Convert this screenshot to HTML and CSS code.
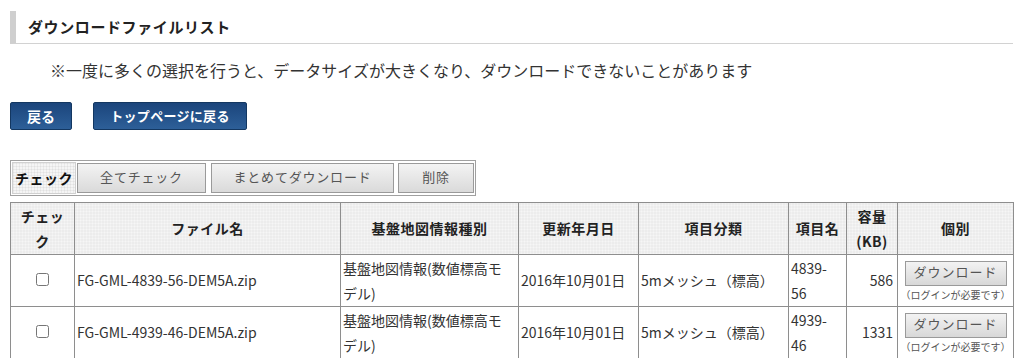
FILE: index.html
```html
<!DOCTYPE html>
<html lang="ja">
<head>
<meta charset="utf-8">
<title>ダウンロードファイルリスト</title>
<link rel="stylesheet" href="styles.css">
</head>
<body>
<div class="page">
  <h2 class="title">ダウンロードファイルリスト</h2>
  <p class="notice">※一度に多くの選択を行うと、データサイズが大きくなり、ダウンロードできないことがあります</p>
  <div class="nav">
    <button class="btn-blue btn-back">戻る</button>
    <button class="btn-blue btn-top">トップページに戻る</button>
  </div>
  <div class="checkbar">
    <div class="check-label">チェック</div>
    <button class="btn-grey w-all">全てチェック</button>
    <button class="btn-grey w-bulk">まとめてダウンロード</button>
    <button class="btn-grey w-del">削除</button>
  </div>
  <table class="list">
    <colgroup>
      <col class="c-check"><col class="c-name"><col class="c-kind"><col class="c-date"><col class="c-cat"><col class="c-item"><col class="c-size"><col class="c-dl">
    </colgroup>
    <thead>
      <tr>
        <th class="h-check">チェック</th>
        <th>ファイル名</th>
        <th>基盤地図情報種別</th>
        <th>更新年月日</th>
        <th>項目分類</th>
        <th>項目名</th>
        <th>容量<br>(KB)</th>
        <th>個別</th>
      </tr>
    </thead>
    <tbody>
      <tr>
        <td class="t-check"><input type="checkbox"></td>
        <td>FG-GML-4839-56-DEM5A.zip</td>
        <td class="t-kind">基盤地図情報(数値標高モデル)</td>
        <td>2016年10月01日</td>
        <td>5mメッシュ（標高）</td>
        <td class="t-item">4839-56</td>
        <td class="t-size">586</td>
        <td class="t-dl"><button class="btn-dl">ダウンロード</button><div class="login">（ログインが必要です）</div></td>
      </tr>
      <tr>
        <td class="t-check"><input type="checkbox"></td>
        <td>FG-GML-4939-46-DEM5A.zip</td>
        <td class="t-kind">基盤地図情報(数値標高モデル)</td>
        <td>2016年10月01日</td>
        <td>5mメッシュ（標高）</td>
        <td class="t-item">4939-46</td>
        <td class="t-size">1331</td>
        <td class="t-dl"><button class="btn-dl">ダウンロード</button><div class="login">（ログインが必要です）</div></td>
      </tr>
    </tbody>
  </table>
</div>
</body>
</html>
```

FILE: styles.css
```css
* { box-sizing: border-box; }
html, body { margin: 0; padding: 0; background: #fff; }
body {
  font-family: "Noto Sans CJK JP", "Noto Sans", sans-serif;
  color: #333;
  font-size: 14px;
}
.page {
  padding: 11px 11px 0 10px;
  width: 1024px;
}
.title {
  margin: 0;
  height: 33px;
  line-height: 32px;
  border-left: 6px solid #cfcfcf;
  border-bottom: 1px solid #d2d2d2;
  padding-left: 12px;
  font-size: 15px;
  font-weight: bold;
  letter-spacing: 0.6px;
  color: #222;
}
.notice {
  margin: 14px 0 0 0;
  padding-left: 40px;
  font-size: 16px;
  line-height: 24px;
  color: #333;
}
.nav {
  display: flex;
  gap: 21px;
  margin-top: 20px;
}
.btn-blue {
  font-family: inherit;
  height: 28px;
  border: 1px solid #133761;
  border-radius: 2px;
  background: linear-gradient(to bottom, #1b457c, #2d5f98);
  color: #fff;
  font-weight: bold;
  font-size: 13px;
  padding: 0;
  line-height: 26px;
}
.btn-back { width: 62px; font-size: 14px; }
.btn-top { width: 154px; letter-spacing: 0.3px; }
.checkbar {
  display: flex;
  align-items: stretch;
  width: 466px;
  height: 36px;
  margin-top: 30px;
  border: 1px solid #a0a0a0;
  padding: 1px;
}
.check-label {
  width: 64px;
  display: flex;
  align-items: center;
  justify-content: center;
  font-weight: bold;
  font-size: 14px;
  letter-spacing: 0.5px;
  color: #111;
  background-color: #f5f5f5;
  background-image: linear-gradient(90deg, rgba(0,0,0,0.045) 1px, transparent 1px), linear-gradient(rgba(0,0,0,0.045) 1px, transparent 1px);
  background-size: 3px 3px;
  border: 1px solid #d0d0d0;
}
.btn-grey {
  font-family: inherit;
  margin: 1px 0 1px 0;
  border: 1px solid #9a9a9a;
  background: linear-gradient(to bottom, #f3f3f3, #dadada);
  color: #555;
  font-size: 13px;
  letter-spacing: 0.8px;
  padding: 0 0 4px 0;
}
.w-all { width: 129px; margin-left: 1px; }
.w-bulk { width: 183px; margin-left: 5px; }
.w-del { width: 76px; margin-left: 4px; }
.list {
  margin-top: 6px;
  width: 1003px;
  table-layout: fixed;
  border-collapse: collapse;
  border: 1px solid #999;
}
.c-check { width: 64px; }
.c-name { width: 266px; }
.c-kind { width: 178px; }
.c-date { width: 120px; }
.c-cat { width: 150px; }
.c-item { width: 58px; }
.c-size { width: 51px; }
.c-dl { width: 116px; }
.list th, .list td {
  border: 1px solid #8e8e8e;
  line-height: 25px;
  font-size: 14px;
  vertical-align: middle;
}
.list th {
  height: 52px;
  padding: 0 2px;
  font-weight: bold;
  color: #222;
  letter-spacing: 0.5px;
  background-color: #f6f6f6;
  background-image: linear-gradient(90deg, rgba(0,0,0,0.045) 1px, transparent 1px), linear-gradient(rgba(0,0,0,0.045) 1px, transparent 1px);
  background-size: 3px 3px;
}
.list th.h-check { padding: 0 6px; }
.list td {
  height: 52px;
  padding: 0 2px;
  color: #333;
}
.list td.t-check { text-align: center; }
.t-check input { margin: 3px 0 0 0; width: 13px; height: 13px; }
.list td.t-kind { padding-right: 10px; }
.list td.t-item { padding-right: 10px; }
.list td.t-size { text-align: right; padding-right: 4px; }
.list td.t-dl { text-align: center; padding: 0; line-height: 1; }
.btn-dl {
  font-family: inherit;
  display: block;
  margin: 0 auto;
  width: 102px;
  height: 25px;
  border: 1px solid #9a9a9a;
  background: linear-gradient(to bottom, #f3f3f3, #d8d8d8);
  color: #555;
  font-size: 13px;
  letter-spacing: 1px;
  padding: 0 0 3px 0;
}
.login {
  margin-top: 3px;
  font-size: 10px;
  color: #555;
  line-height: 12px;
  letter-spacing: 0;
}
```
